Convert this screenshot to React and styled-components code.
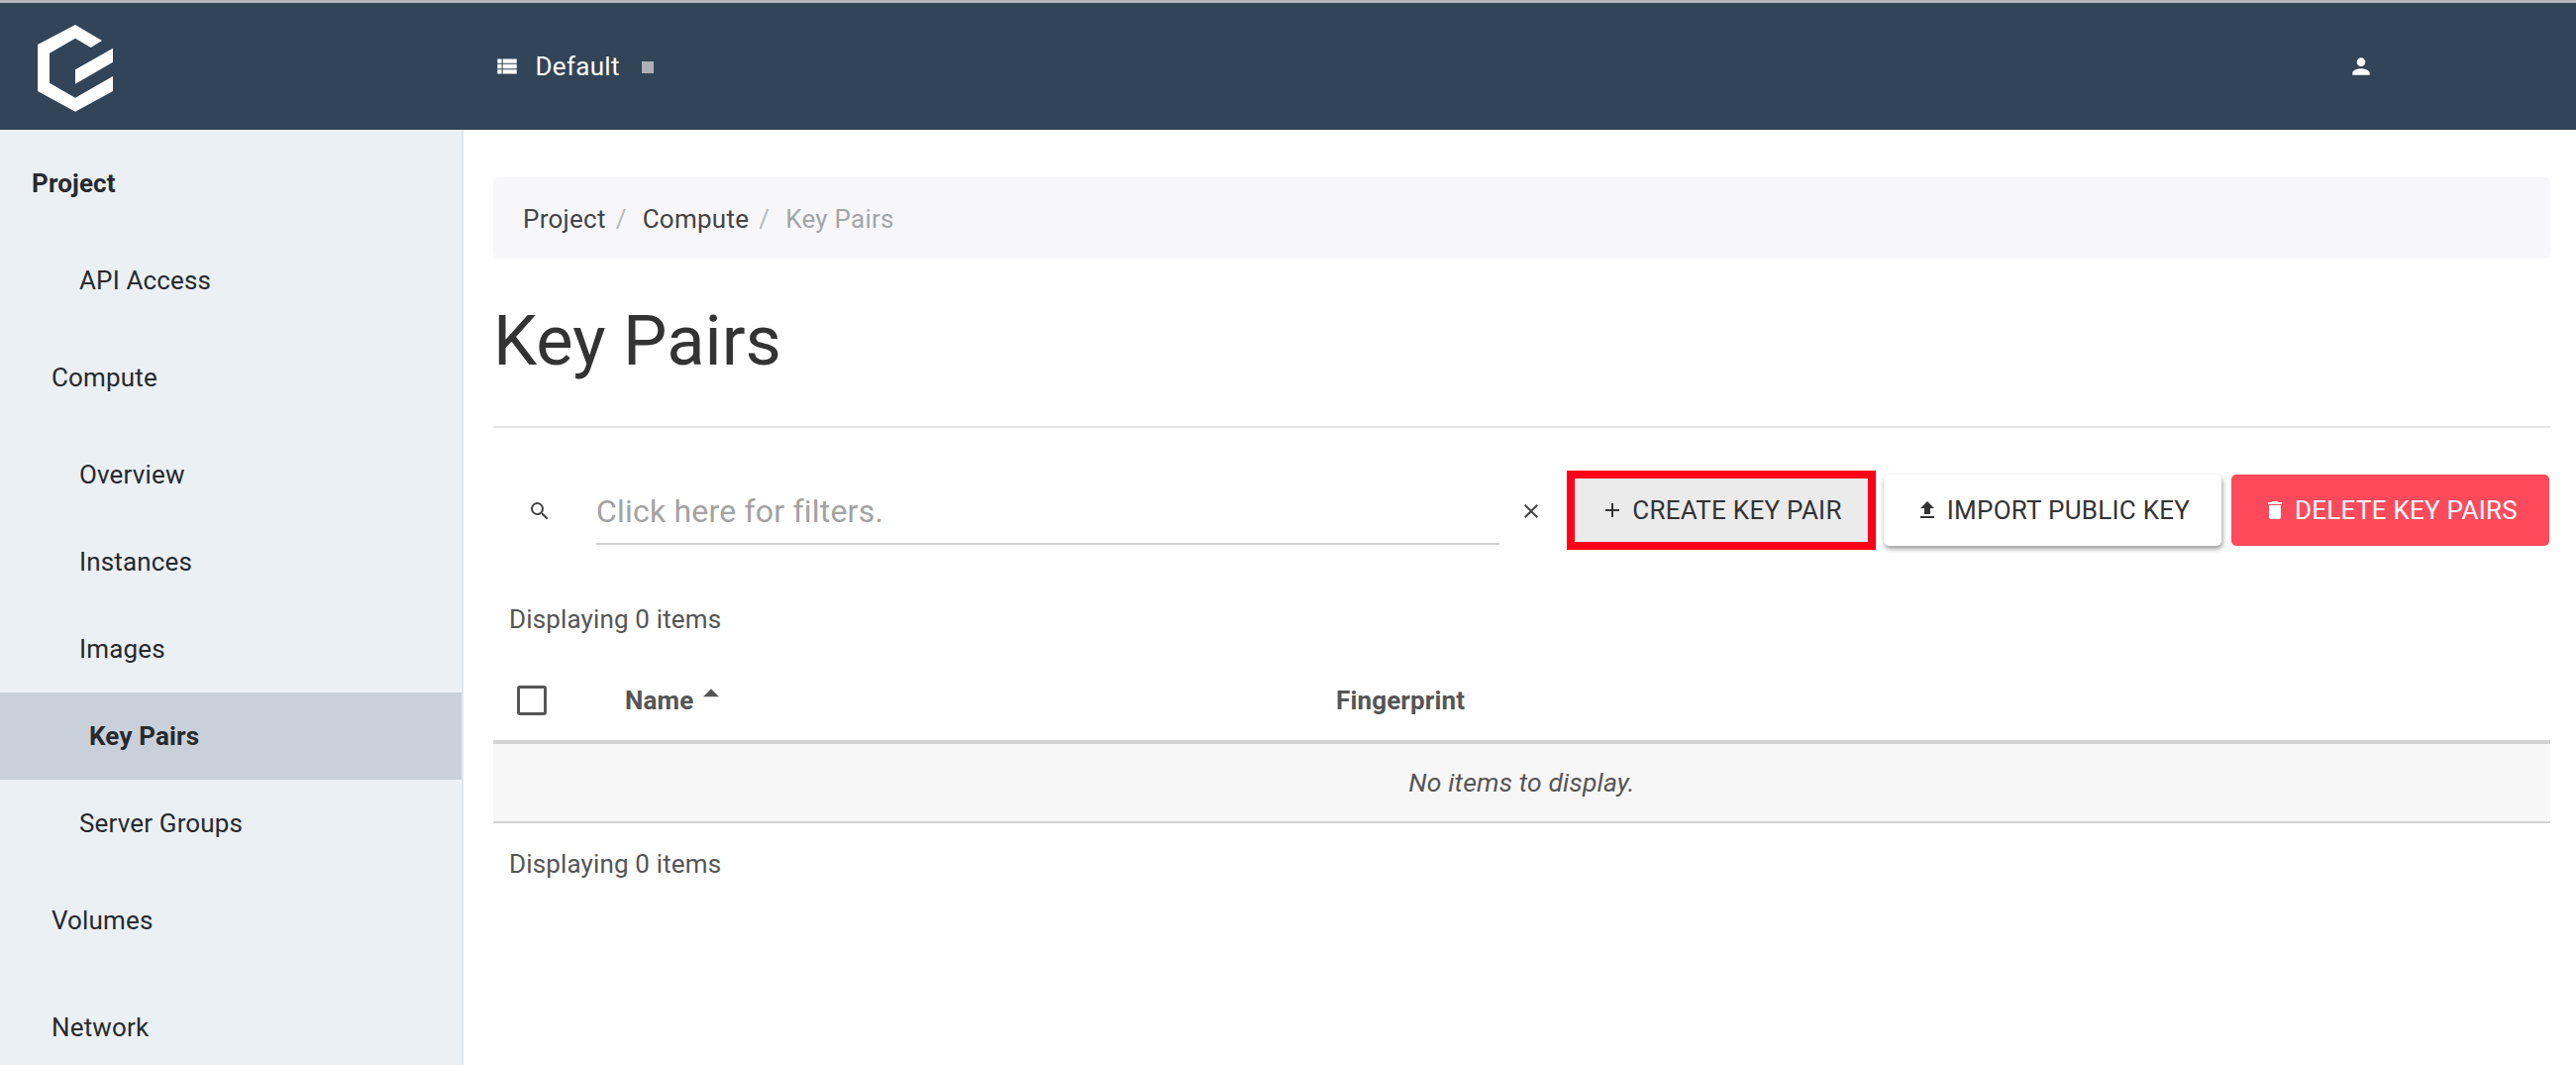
import React from 'react';
import styled, { createGlobalStyle } from 'styled-components';
import {
  MdViewList,
  MdPerson,
  MdSearch,
  MdClose,
  MdAdd,
  MdFileUpload,
  MdDelete,
  MdArrowDropUp
} from 'react-icons/md';

const GlobalStyle = createGlobalStyle`
  html, body {
    margin: 0;
    padding: 0;
    height: 100%;
    overflow: hidden;
    background: #fff;
    font-family: Roboto, "Liberation Sans", sans-serif;
  }
  * { box-sizing: border-box; }
`;

const Logo = () => (
  <svg width='76' height='88' viewBox='38 23 76 88' fill='#fff'>
    <path d='M76 23 L103 39 L91.7 46 L76 36.7 L50 51.7 L50 81.7 L76 96.7 L114 75 L114 90 L76 110.7 L38 90 L38 43 Z' />
    <path d='M114 46.7 L114 60.7 L76 82.7 L76 68.3 Z' />
  </svg>
);

const navItems = [
  { label: 'API Access', level: 'sub' },
  { label: 'Compute', level: 'group' },
  { label: 'Overview', level: 'sub' },
  { label: 'Instances', level: 'sub' },
  { label: 'Images', level: 'sub' },
  { label: 'Key Pairs', level: 'active' },
  { label: 'Server Groups', level: 'sub' },
  { label: 'Volumes', level: 'group' },
  { label: 'Network', level: 'group' }
];

export default function App() {
  return (
    <Page>
      <GlobalStyle />
      <TopBar>
        <Brand>
          <Logo />
        </Brand>
        <ProjectPicker>
          <MdViewList size={26} />
          <PickerLabel>Default</PickerLabel>
          <PickerCaret />
        </ProjectPicker>
        <UserMenu>
          <MdPerson size={26} />
        </UserMenu>
      </TopBar>
      <Body>
        <Sidebar>
          <NavTitle>Project</NavTitle>
          {navItems.map((item) => (
            <NavItem key={item.label} $level={item.level}>
              {item.label}
            </NavItem>
          ))}
        </Sidebar>
        <Main>
          <Breadcrumb>
            <Crumb>Project</Crumb>
            <Slash>/</Slash>
            <Crumb>Compute</Crumb>
            <Slash>/</Slash>
            <Crumb $current>Key Pairs</Crumb>
          </Breadcrumb>
          <Heading>Key Pairs</Heading>
          <Toolbar>
            <SearchIcon>
              <MdSearch size={24} />
            </SearchIcon>
            <FilterInput placeholder='Click here for filters.' />
            <ClearIcon>
              <MdClose size={24} />
            </ClearIcon>
            <Highlight>
              <ActionButton $variant='plain'>
                <MdAdd size={24} />
                CREATE KEY PAIR
              </ActionButton>
            </Highlight>
            <ActionButton $variant='raised'>
              <MdFileUpload size={24} />
              IMPORT PUBLIC KEY
            </ActionButton>
            <ActionButton $variant='danger'>
              <MdDelete size={24} />
              DELETE KEY PAIRS
            </ActionButton>
          </Toolbar>
          <CountText>Displaying 0 items</CountText>
          <Table>
            <thead>
              <tr>
                <CheckCell>
                  <CheckBox />
                </CheckCell>
                <NameHead>
                  Name
                  <SortCaret>
                    <MdArrowDropUp size={38} />
                  </SortCaret>
                </NameHead>
                <HeadCell>Fingerprint</HeadCell>
              </tr>
            </thead>
            <tbody>
              <tr>
                <EmptyCell colSpan={3}>No items to display.</EmptyCell>
              </tr>
            </tbody>
          </Table>
          <CountText $bottom>Displaying 0 items</CountText>
        </Main>
      </Body>
    </Page>
  );
}

const Page = styled.div`
  height: 1075px;
  display: flex;
  flex-direction: column;
  overflow: hidden;
  border-top: 3px solid #b4b6b8;
  color: #333;
`;

const TopBar = styled.header`
  height: 128px;
  flex: none;
  display: flex;
  align-items: center;
  background: #324457;
  color: #fff;
`;

const Brand = styled.div`
  width: 499px;
  padding-left: 38px;
  padding-top: 4px;
  display: flex;
`;

const ProjectPicker = styled.div`
  display: flex;
  align-items: center;
  font-size: 26px;
`;

const PickerLabel = styled.span`
  margin-left: 15.5px;
  letter-spacing: 0.3px;
`;

const PickerCaret = styled.span`
  width: 12px;
  height: 12px;
  margin-left: 22px;
  margin-top: 2px;
  background: #aeb1b4;
`;

const UserMenu = styled.div`
  margin-left: auto;
  margin-right: 204px;
  display: flex;
`;

const Body = styled.div`
  flex: 1;
  display: flex;
  min-height: 0;
`;

const Sidebar = styled.nav`
  width: 468px;
  flex: none;
  background: #ebf0f5;
  border-right: 2px solid #dfe6ee;
  color: #262a2e;
  font-size: 26px;
  letter-spacing: 0.15px;
`;

const NavTitle = styled.div`
  height: 108px;
  padding-left: 32px;
  display: flex;
  align-items: center;
  font-weight: 700;
`;

const NavItem = styled.div`
  display: flex;
  align-items: center;
  height: ${(p) => (p.$level === 'group' ? '108px' : '88px')};
  padding-left: ${(p) =>
    p.$level === 'group' ? '52px' : p.$level === 'active' ? '90px' : '80px'};
  font-weight: ${(p) => (p.$level === 'active' ? 700 : 400)};
  background: ${(p) => (p.$level === 'active' ? '#c9d0d9' : 'transparent')};
`;

const Main = styled.main`
  flex: 1;
  min-width: 0;
  padding: 48px 26px 0 30px;
`;

const Breadcrumb = styled.div`
  height: 82px;
  padding: 2px 0 0 30px;
  display: flex;
  align-items: center;
  background: #f7f7f9;
  border-radius: 6px;
  font-size: 26px;
  letter-spacing: 0.25px;
`;

const Crumb = styled.span`
  color: ${(p) => (p.$current ? '#a3a6a9' : '#444')};
`;

const Slash = styled.span`
  color: #b5b8bb;
  margin: 0 16px 0 10px;
`;

const Heading = styled.h1`
  margin: 0;
  height: 171px;
  padding-bottom: 3px;
  display: flex;
  align-items: center;
  border-bottom: 2px solid #e5e5e5;
  font-size: 70.5px;
  font-weight: 400;
  color: #333;
`;

const Toolbar = styled.div`
  height: 80px;
  margin-top: 43px;
  display: flex;
  align-items: center;
`;

const SearchIcon = styled.span`
  width: 104px;
  padding: 2px 0 0 35px;
  display: flex;
  color: #444;
`;

const FilterInput = styled.input`
  width: 912px;
  height: 68px;
  margin-top: 1px;
  padding: 2px 0 0;
  border: none;
  border-bottom: 2px solid #d2d2d2;
  outline: none;
  font: 400 32px Roboto, sans-serif;
  letter-spacing: 0.2px;
  &::placeholder {
    color: #a2a2a2;
  }
`;

const ClearIcon = styled.span`
  width: 68px;
  padding: 2px 0 0 20px;
  display: flex;
  color: #444;
`;

const Highlight = styled.div`
  width: 312px;
  height: 80px;
  margin-right: 8px;
  border: 8px solid #ff0018;
  display: flex;
`;

const ActionButton = styled.button`
  flex: ${(p) => (p.$variant === 'plain' ? 1 : 'none')};
  width: ${(p) => (p.$variant === 'raised' ? '341px' : p.$variant === 'danger' ? '321px' : 'auto')};
  height: ${(p) => (p.$variant === 'plain' ? 'auto' : '72px')};
  margin-left: ${(p) => (p.$variant === 'danger' ? '10px' : '0')};
  display: flex;
  align-items: center;
  justify-content: center;
  gap: 8px;
  border: none;
  border-radius: ${(p) => (p.$variant === 'plain' ? '0' : '5px')};
  background: ${(p) =>
    p.$variant === 'plain' ? '#ebebeb' : p.$variant === 'danger' ? '#ff4a5c' : '#fff'};
  color: ${(p) => (p.$variant === 'danger' ? '#fff' : '#333')};
  box-shadow: ${(p) =>
    p.$variant === 'raised' ? '1px 3px 5px rgba(0, 0, 0, 0.4)' : 'none'};
  font: 400 26px Roboto, sans-serif;
  letter-spacing: 0.25px;
`;

const CountText = styled.div`
  margin-top: ${(p) => (p.$bottom ? '25px' : '54px')};
  padding-left: 16px;
  height: 32px;
  line-height: 32px;
  font-size: 26px;
  letter-spacing: 0.15px;
  color: #555;
`;

const Table = styled.table`
  width: 100%;
  margin-top: 30px;
  border-collapse: collapse;
  table-layout: fixed;
`;

const HeadCell = styled.th`
  height: 78px;
  padding: 0 0 4px;
  border-bottom: 4px solid #d3d3d3;
  text-align: left;
  font-size: 26px;
  font-weight: 700;
  letter-spacing: 0.15px;
  color: #555;
`;

const CheckCell = styled(HeadCell)`
  width: 133px;
  padding-left: 24px;
`;

const NameHead = styled(HeadCell)`
  width: 718px;
`;

const SortCaret = styled.span`
  display: inline-flex;
  vertical-align: middle;
  margin: -18px 0 0 -1px;
  color: #555;
`;

const CheckBox = styled.div`
  width: 30px;
  height: 30px;
  border: 3px solid #555;
  border-radius: 3px;
`;

const EmptyCell = styled.td`
  height: 81px;
  padding: 0 0 2px;
  background: #f7f7f7;
  border-bottom: 2px solid #d3d3d3;
  text-align: center;
  font-size: 26.5px;
  font-style: italic;
  letter-spacing: 0.15px;
  color: #555;
`;
